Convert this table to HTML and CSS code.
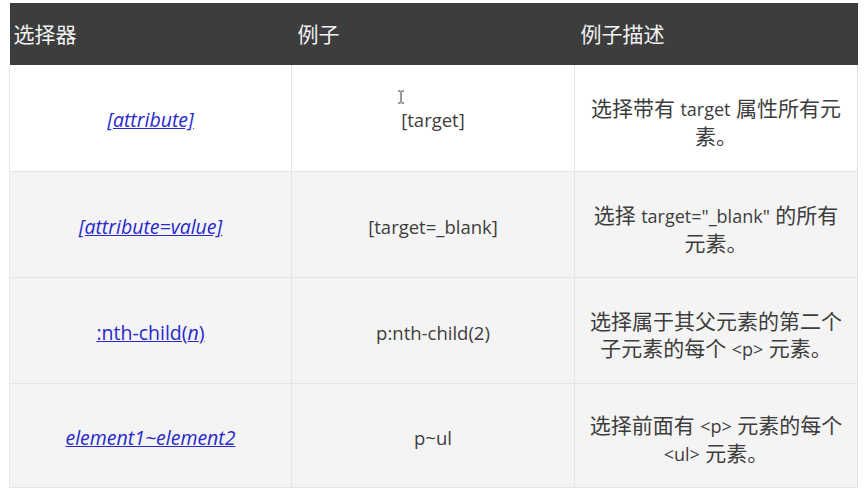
FILE: index.html
```
<!DOCTYPE html>
<html lang="zh">
<head>
<meta charset="utf-8">
<link rel="stylesheet" href="styles.css">
</head>
<body>
<div class="wrap">
<table class="ref">
  <colgroup><col class="c1"><col class="c2"><col class="c3"></colgroup>
  <thead>
    <tr><th>选择器</th><th>例子</th><th>例子描述</th></tr>
  </thead>
  <tbody>
    <tr class="white">
      <td><a href="#"><i>[attribute]</i></a></td>
      <td class="ex">[target]</td>
      <td class="desc">选择带有 <span class="lat">target</span> 属性所有元<br>素。</td>
    </tr>
    <tr>
      <td><a href="#"><i>[attribute=value]</i></a></td>
      <td class="ex">[target=_blank]</td>
      <td class="desc">选择 <span class="lat">target="_blank"</span> 的所有<br>元素。</td>
    </tr>
    <tr>
      <td><a href="#">:nth-child(<i>n</i>)</a></td>
      <td class="ex">p:nth-child(2)</td>
      <td class="desc">选择属于其父元素的第二个<br>子元素的每个 <span class="lat">&lt;p&gt;</span> 元素。</td>
    </tr>
    <tr>
      <td><a href="#"><i>element1~element2</i></a></td>
      <td class="ex">p~ul</td>
      <td class="desc">选择前面有 <span class="lat">&lt;p&gt;</span> 元素的每个<br><span class="lat">&lt;ul&gt;</span> 元素。</td>
    </tr>
  </tbody>
</table>
<svg class="cursor" width="8" height="14" viewBox="0 0 8 14"><path d="M1 1h2.5M4.5 1H7M4 1.5v11M1 13h2.5M4.5 13H7" stroke="#333" stroke-width="1" fill="none"/></svg>
</div>
</body>
</html>
```
FILE: styles.css
```
html, body {
  margin: 0;
  padding: 0;
  background: #ffffff;
}
body {
  font-family: "Open Sans", "Noto Sans CJK SC", sans-serif;
}
.wrap {
  position: relative;
  padding: 3px 0 0 9px;
}
.ref {
  border-collapse: collapse;
  width: 848px;
  table-layout: fixed;
}
.c1 { width: 282px; }
.c2 { width: 283px; }
.c3 { width: 283px; }
.ref th {
  background: #3d3d3d;
  color: #f2f2f2;
  font-weight: normal;
  font-size: 21px;
  text-align: left;
  height: 62px;
  padding: 0 0 2px 4px;
  border: 0;
  box-sizing: border-box;
}
.ref th:nth-child(2), .ref th:nth-child(3) { padding-left: 6px; }
.ref td {
  background: #f4f4f4;
  border: 1px solid #e4e4e4;
  text-align: center;
  height: 106px;
  padding: 4px 4px 0;
  font-size: 18.5px;
  color: #3d3d3d;
  line-height: 27px;
  box-sizing: border-box;
  white-space: nowrap;
}
.ref tbody tr:first-child td { border-top: 0; }
.ref tr.white td { background: #ffffff; }
.ref td:first-child { border-left: 1px solid #e8e8e8; }
.ref td a {
  color: #2828cc;
  text-decoration: underline;
  font-size: 19.5px;
}
.ref td.desc {
  font-size: 21px;
  padding-top: 10px;
}
.ref td.desc .lat {
  font-size: 18px;
}
.ref tbody tr:last-child td { height: 104px; }
.cursor {
  position: absolute;
  left: 397px;
  top: 90px;
}
```
